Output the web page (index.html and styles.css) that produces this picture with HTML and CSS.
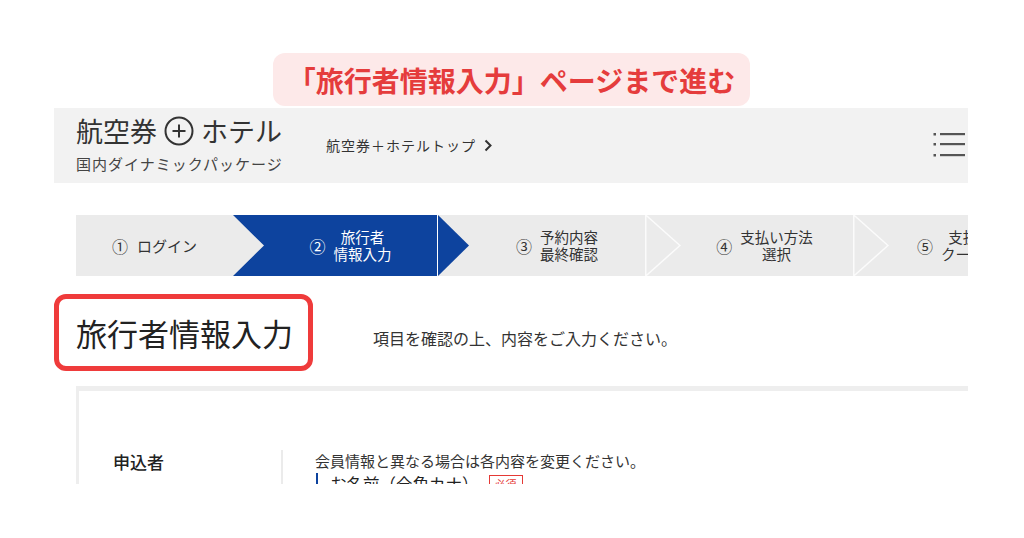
FILE: index.html
```html
<!DOCTYPE html>
<html lang="ja">
<head>
<meta charset="utf-8">
<title>旅行者情報入力</title>
<link rel="stylesheet" href="styles.css">
</head>
<body>
<div class="callout">「旅行者情報入力」ページまで進む</div>
<div class="shot">
  <header class="site-header">
    <div class="brand">
      <div class="logo">
        <span>航空券</span>
        <svg class="plus" viewBox="0 0 30 30" aria-hidden="true"><circle cx="15" cy="15" r="13.5" fill="none" stroke="#333" stroke-width="2"/><path d="M15 8.5v13M8.5 15h13" stroke="#333" stroke-width="2" fill="none"/></svg>
        <span>ホテル</span>
      </div>
      <div class="sub">国内ダイナミックパッケージ</div>
    </div>
    <a class="top-link" href="#">航空券＋ホテルトップ<svg class="chev" viewBox="0 0 8 13" aria-hidden="true"><path d="M1.5 1.5l5 5-5 5" fill="none" stroke="#333" stroke-width="2"/></svg></a>
    <button class="menu" type="button" aria-label="メニュー">
      <svg viewBox="0 0 32 30" aria-hidden="true"><g fill="#555"><rect x="0.5" y="5" width="2.5" height="2.5"/><rect x="0.5" y="15" width="2.5" height="2.5"/><rect x="0.5" y="26" width="2.5" height="2.5"/><rect x="7" y="5" width="25" height="2.2"/><rect x="7" y="15" width="25" height="2.2"/><rect x="7" y="26" width="25" height="2.2"/></g></svg>
    </button>
  </header>

  <ol class="steps">
    <li class="step step-first"><span class="num">①</span><span class="label">ログイン</span></li>
    <li class="step step-current"><span class="num">②</span><span class="label"><span class="ln">旅行者</span><span class="ln">情報入力</span></span></li>
    <li class="step step-next"><span class="num">③</span><span class="label"><span class="ln">予約内容</span><span class="ln">最終確認</span></span></li>
    <li class="step"><svg class="sep" viewBox="0 0 36 61" preserveAspectRatio="none" aria-hidden="true"><path d="M0.75 0V61M0.75 0L35 30.5L0.75 61" fill="none" stroke="#fbfbfb" stroke-width="1.5"/></svg><span class="num">④</span><span class="label"><span class="ln">支払い方法</span><span class="ln">選択</span></span></li>
    <li class="step"><svg class="sep" viewBox="0 0 36 61" preserveAspectRatio="none" aria-hidden="true"><path d="M0.75 0V61M0.75 0L35 30.5L0.75 61" fill="none" stroke="#fbfbfb" stroke-width="1.5"/></svg><span class="num">⑤</span><span class="label"><span class="ln">支払い情報</span><span class="ln">クーポン入力</span></span></li>
  </ol>

  <div class="title-row">
    <h1 class="title">旅行者情報入力</h1>
    <p class="lead">項目を確認の上、内容をご入力ください。</p>
  </div>

  <section class="card">
    <div class="row">
      <div class="row-label">申込者</div>
      <div class="row-body">
        <p class="note">会員情報と異なる場合は各内容を変更ください。</p>
        <div class="field"><span class="field-name">お名前（全角カナ）</span><span class="req">必須</span></div>
      </div>
    </div>
  </section>
</div>
</body>
</html>
```
FILE: styles.css
```css
* { box-sizing: border-box; }

body {
  margin: 0;
  background: #fff;
  font-family: "Noto Sans CJK JP", "Noto Sans", sans-serif;
  color: #333;
}

.callout {
  width: 477px;
  height: 53px;
  margin: 53px 0 0 273px;
  background: #fde9e9;
  border-radius: 12px;
  display: flex;
  align-items: center;
  justify-content: center;
  color: #e53c3c;
  font-size: 28px;
  font-weight: 700;
  line-height: 1;
}

.shot {
  width: 914px;
  height: 376px;
  margin: 2px 0 0 54px;
  overflow: hidden;
}

/* header */
.site-header {
  height: 75px;
  background: #f2f2f2;
  display: flex;
  align-items: flex-start;
  padding: 7px 3px 0 22px;
}

.brand { width: 250px; }

.logo {
  display: flex;
  align-items: center;
  gap: 6px;
  font-size: 27px;
  line-height: 32px;
  color: #333;
}

.plus { width: 30px; height: 30px; flex: none; margin: 0 1px; }

.sub {
  margin-top: 8px;
  font-size: 15px;
  line-height: 18px;
  letter-spacing: 1px;
  color: #444;
}

.top-link {
  margin-top: 20px;
  display: flex;
  align-items: center;
  gap: 8px;
  font-size: 14px;
  line-height: 20px;
  letter-spacing: 1px;
  color: #333;
  text-decoration: none;
}

.chev { width: 8px; height: 13px; }

.menu {
  margin-left: auto;
  margin-top: 13px;
  padding: 0;
  border: 0;
  background: none;
  width: 32px;
  height: 30px;
}
.menu svg { display: block; width: 32px; height: 30px; }

/* steps */
.steps {
  list-style: none;
  margin: 32px 0 0 22px;
  padding: 0;
  display: flex;
  height: 61px;
  background: #ebebeb;
}

.step {
  flex: 0 0 208px;
  position: relative;
  display: flex;
  align-items: center;
  justify-content: center;
  gap: 8px;
  padding-left: 31px;
  background: #ebebeb;
  color: #333;
  font-size: 14.5px;
}

.step .num { font-size: 16px; line-height: 20px; }
.step .label {
  display: flex;
  flex-direction: column;
  align-items: center;
  gap: 1px;
}
.step .ln { display: block; line-height: 16px; }

.step-first {
  flex-basis: 157px;
  padding-left: 0;
  gap: 9px;
  font-size: 15px;
}

.step-current {
  flex-basis: 204px;
  background: transparent;
  color: #fff;
  z-index: 2;
}
.step-current::before {
  content: "";
  position: absolute;
  inset: 0;
  background: #0d439e;
  clip-path: polygon(0 0, 100% 0, 100% 100%, 0 100%, 31px 50%);
  z-index: -1;
}
.step-current::after {
  content: "";
  position: absolute;
  top: 0;
  left: calc(100% + 1px);
  width: 31px;
  height: 100%;
  background: #0d439e;
  clip-path: polygon(0 0, 100% 50%, 0 100%);
}

.step-next { border-left: 1px solid #fff; }

.sep {
  position: absolute;
  left: 0;
  top: 0;
  width: 36px;
  height: 61px;
}

/* title */
.title-row {
  display: flex;
  align-items: flex-start;
  margin-top: 18px;
}

.title {
  margin: 0;
  width: 259px;
  height: 77px;
  border: 5px solid #ef3b3b;
  border-radius: 12px;
  padding-left: 17px;
  font-size: 31px;
  font-weight: 400;
  line-height: 67px;
  color: #222;
}

.lead {
  margin: 0 0 0 60px;
  padding-top: 33px;
  font-size: 16px;
  line-height: 22px;
  color: #333;
}

/* card */
.card {
  margin: 15px 0 0 22px;
  border-top: 5px solid #eee;
  border-left: 3px solid #eee;
  padding-top: 59px;
}

.row { display: flex; }

.row-label {
  width: 202px;
  padding-left: 34px;
  font-size: 17px;
  line-height: 24px;
  font-weight: 500;
  color: #222;
}

.row-body {
  border-left: 2px solid #ebebeb;
  padding-left: 32px;
}

.note {
  margin: 0;
  font-size: 15px;
  line-height: 22px;
  color: #333;
}

.field {
  display: flex;
  align-items: center;
  gap: 10px;
  margin: 1px 0 0 1px;
  border-left: 2px solid #0d439e;
  padding-left: 12px;
  font-size: 16.5px;
  line-height: 22px;
  color: #222;
}

.req {
  border: 1px solid #e53935;
  color: #e53935;
  font-size: 11px;
  line-height: 16px;
  padding: 0 5px;
}
```
